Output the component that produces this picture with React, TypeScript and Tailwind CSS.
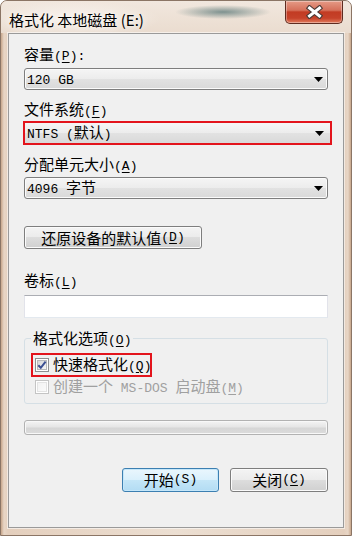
import React from 'react'

// '&' marks the mnemonic letter that follows it
function Mix({ s }: { s: string }) {
  const runs: { lat: boolean; text: string; u?: boolean }[] = []
  let u = false
  for (const ch of s) {
    if (ch === '&') { u = true; continue }
    const lat = ch.charCodeAt(0) < 0x2000
    if (u) { runs.push({ lat, text: ch, u: true }); u = false; continue }
    const last = runs[runs.length - 1]
    if (last && last.lat === lat && !last.u) last.text += ch
    else runs.push({ lat, text: ch })
  }
  return (
    <>
      {runs.map((r, i) => (
        <span key={i} className={(r.lat ? "font-['Liberation_Mono',monospace] text-[13px]" : "font-['Noto_Sans_CJK_SC',sans-serif] text-[15px]") + (r.u ? ' underline underline-offset-[2px]' : '')}>
          {r.text}
        </span>
      ))}
    </>
  )
}

function Label({ s, mt }: { s: string; mt: string }) {
  return <div className={`h-[18px] leading-[18px] whitespace-pre text-black ${mt}`}><Mix s={s} /></div>
}

function Arrow() {
  return (
    <svg width="9" height="5" viewBox="0 0 9 5"><path d="M0 0H9L4.5 5Z" fill="#000" /></svg>
  )
}

function Combo({ s, mt }: { s: string; mt: string }) {
  return (
    <div className={`flex h-[22px] items-center justify-between rounded-[3px] border border-[#7e7e7e] bg-[linear-gradient(to_bottom,#f5f5f5_0%,#ececec_50%,#e2e2e2_50%,#d9d9d9_100%)] shadow-[inset_0_0_0_1px_#fbfbfb] pl-[2px] pr-[4px] ${mt}`}>
      <span className="leading-[18px] whitespace-pre text-black"><Mix s={s} /></span>
      <Arrow />
    </div>
  )
}

function Check({ on, disabled }: { on?: boolean; disabled?: boolean }) {
  return (
    <svg width="14" height="14" viewBox="0 0 14 14" className="shrink-0">
      <defs>
        <linearGradient id={on ? 'cg1' : 'cg2'} x1="0" y1="0" x2="1" y2="1">
          <stop offset="0" stopColor={disabled ? '#f2f2f2' : '#d4d5d7'} />
          <stop offset="1" stopColor={disabled ? '#fbfbfb' : '#f7f7f7'} />
        </linearGradient>
      </defs>
      <rect x="0.5" y="0.5" width="13" height="13" fill="#fff" stroke={disabled ? '#c4c4c4' : '#8e8f8f'} />
      <rect x="2.5" y="2.5" width="9" height="9" fill={`url(#${on ? 'cg1' : 'cg2'})`} stroke={disabled ? '#e3e3e3' : '#b8b9bb'} />
      {on && <path d="M3.3 7.2 L5.8 9.8 L10.6 3.6" fill="none" stroke="#3b4f92" strokeWidth="2" />}
    </svg>
  )
}

export default function App() {
  return (
    <div className="flex h-[536px] w-[352px] flex-col overflow-hidden rounded-t-[7px] border border-[#8b7565] bg-[linear-gradient(to_right,#c7a68b,#e8d6c6_3px,#e4cfbd_7px,#ecdfd2_50%,#e4cfbd_calc(100%_-_7px),#e8d6c6_calc(100%_-_3px),#c7a68b)]">
      {/* title bar */}
      <div className="flex h-[32px] shrink-0 items-start bg-[radial-gradient(ellipse_48px_7px_at_222px_11px,rgba(88,118,118,0.75),transparent),radial-gradient(ellipse_90px_18px_at_70px_18px,rgba(255,255,255,0.6),transparent),linear-gradient(to_bottom,#f1e7de,#eadccf)]">
        <div className="ml-[8px] mt-[10px] h-[18px] leading-[18px] whitespace-pre font-['Noto_Sans_CJK_SC',sans-serif] text-[15px] text-black [text-shadow:0_0_6px_#fff]">
          格式化 本地磁盘 (E:)
        </div>
        <div className="ml-auto mr-[8px] flex h-[23px] w-[58px] items-center justify-center rounded-b-[5px] border border-t-0 border-[#5e2b20] bg-[linear-gradient(to_bottom,#e59a86_0%,#d5705a_42%,#c23b23_50%,#c6422a_78%,#e27c5d_100%)] shadow-[inset_0_0_0_1px_rgba(255,255,255,0.35)]">
          <svg width="17" height="14" viewBox="0 0 17 14">
            <path d="M3.5 3 L13.5 11 M13.5 3 L3.5 11" stroke="#4b3a36" strokeWidth="5.2" strokeLinecap="square" />
            <path d="M3.5 3 L13.5 11 M13.5 3 L3.5 11" stroke="#fff" strokeWidth="3" strokeLinecap="square" />
          </svg>
        </div>
      </div>

      {/* client area */}
      <div className="mx-[7px] flex h-[495px] shrink-0 flex-col border border-[#9a9a9a] bg-[#f0f0f0] px-[15px] shadow-[0_0_0_1px_rgba(255,255,255,0.55)]">
        <Label s="容量(&P):" mt="mt-[11px]" />
        <Combo s="120 GB" mt="mt-[5px]" />

        <Label s="文件系统(&F)" mt="mt-[10px]" />
        <div className="-ml-[1px] mt-[3px] h-[24px] w-[309px] border-2 border-[#e3141c]">
          <div className="flex h-[20px] items-center justify-between bg-[linear-gradient(to_bottom,#f5f5f5_0%,#ececec_50%,#e2e2e2_50%,#d9d9d9_100%)] pl-[2px] pr-[6px]">
            <span className="leading-[18px] whitespace-pre text-black"><Mix s="NTFS (默认)" /></span>
            <Arrow />
          </div>
        </div>

        <Label s="分配单元大小(&A)" mt="mt-[10px]" />
        <Combo s="4096 字节" mt="mt-[4px]" />

        <button className="mt-[27px] flex h-[23px] w-[178px] items-center justify-center rounded-[3px] border border-[#7e7e7e] bg-[linear-gradient(to_bottom,#f4f4f4_0%,#ebebeb_50%,#dddddd_50%,#d0d0d0_100%)] shadow-[inset_0_0_0_1px_#fbfbfb] leading-[18px] whitespace-pre text-black">
          <Mix s="还原设备的默认值(&D)" />
        </button>

        <Label s="卷标(&L)" mt="mt-[22px]" />
        <div className="mt-[6px] h-[23px] border border-[#e2e3ea] border-t-[#abadb3] border-b-[#e3e9ef] bg-white" />

        <fieldset className="mt-[11px] rounded-[3px] border border-[#d5dfe5] pb-[7px] pl-[6px]">
          <legend className="h-[18px] px-[2px] leading-[18px] whitespace-pre text-black"><Mix s="格式化选项(&O)" /></legend>
          <div className="mt-[6px] flex h-[24px] w-[121px] items-center border-2 border-[#e3141c] pl-[2px]">
            <Check on />
            <span className="ml-[4px] leading-[18px] whitespace-pre text-black"><Mix s="快速格式化(&Q)" /></span>
          </div>
          <div className="mt-[1px] flex h-[18px] items-center pl-[4px]">
            <Check disabled />
            <span className="ml-[4px] leading-[18px] whitespace-pre text-[#a0a0a0]"><Mix s="创建一个 MS-DOS 启动盘(&M)" /></span>
          </div>
        </fieldset>

        <div className="mt-[16px] h-[15px] rounded-[3px] border border-[#b2b2b2] bg-[linear-gradient(to_bottom,#f4f4f4_0%,#e6e6e6_45%,#d6d6d6_55%,#dcdcdc_100%)] shadow-[inset_0_0_0_1px_#f8f8f8]" />

        <div className="mt-[33px] flex justify-end gap-[11px]">
          <button className="flex h-[24px] w-[97px] items-center justify-center rounded-[3px] border border-[#3c7fb1] bg-[linear-gradient(to_bottom,#eaf6fd_0%,#d9f0fc_50%,#c4e6f8_50%,#b3dcf3_100%)] shadow-[inset_0_0_0_1px_#c5e7fa] leading-[18px] whitespace-pre text-black">
            <Mix s="开始(S)" />
          </button>
          <button className="flex h-[24px] w-[98px] items-center justify-center rounded-[3px] border border-[#7e7e7e] bg-[linear-gradient(to_bottom,#f4f4f4_0%,#ebebeb_50%,#dddddd_50%,#d0d0d0_100%)] shadow-[inset_0_0_0_1px_#fbfbfb] leading-[18px] whitespace-pre text-black">
            <Mix s="关闭(&C)" />
          </button>
        </div>
      </div>
    </div>
  )
}
